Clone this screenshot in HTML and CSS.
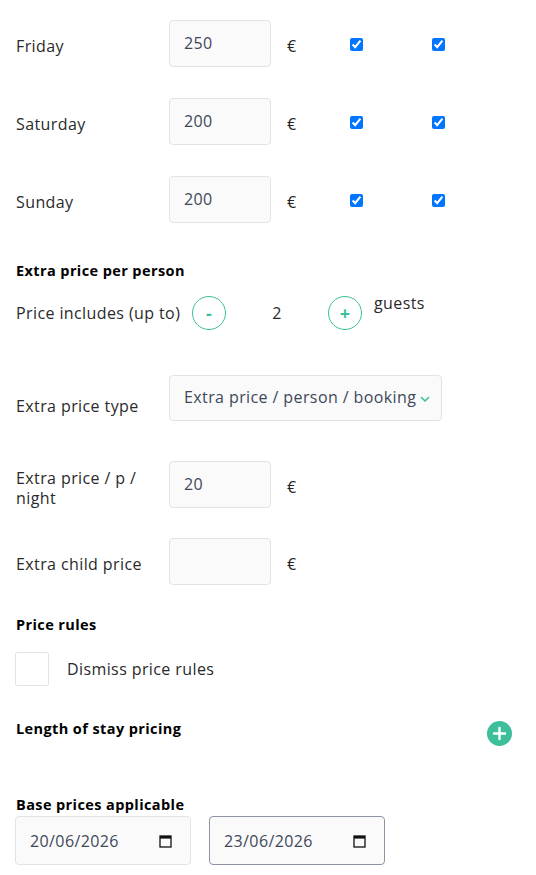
FILE: index.html
```html
<!DOCTYPE html>
<html lang="en">
<head>
<meta charset="utf-8">
<title>Pricing</title>
<link rel="stylesheet" href="styles.css">
</head>
<body>
<div class="page">
  <div class="day-row">
    <span class="label">Friday</span>
    <div class="box">250</div>
    <span class="euro">€</span>
    <span class="cb-cell"><input type="checkbox" checked></span>
    <span class="cb-cell"><input type="checkbox" checked></span>
  </div>
  <div class="day-row">
    <span class="label">Saturday</span>
    <div class="box">200</div>
    <span class="euro">€</span>
    <span class="cb-cell"><input type="checkbox" checked></span>
    <span class="cb-cell"><input type="checkbox" checked></span>
  </div>
  <div class="day-row">
    <span class="label">Sunday</span>
    <div class="box">200</div>
    <span class="euro">€</span>
    <span class="cb-cell"><input type="checkbox" checked></span>
    <span class="cb-cell"><input type="checkbox" checked></span>
  </div>

  <h3 class="heading h-extra">Extra price per person</h3>
  <div class="guests-row">
    <span class="label-inline">Price includes (up to)</span>
    <span class="round-btn">-</span>
    <span class="count">2</span>
    <span class="round-btn">+</span>
    <span class="guests">guests</span>
  </div>

  <div class="field-row select-row">
    <span class="label">Extra price type</span>
    <div class="select">
      <span>Extra price / person / booking</span>
      <svg class="chev" width="10" height="7" viewBox="0 0 10 7"><path d="M1.5 1.5 L5 5 L8.5 1.5" fill="none" stroke="#3dbf9c" stroke-width="1.6" stroke-linecap="round" stroke-linejoin="round"/></svg>
    </div>
  </div>

  <div class="field-row night-row">
    <span class="label">Extra price / p /<br>night</span>
    <div class="box">20</div>
    <span class="euro">€</span>
  </div>

  <div class="field-row child-row">
    <span class="label">Extra child price</span>
    <div class="box"></div>
    <span class="euro">€</span>
  </div>

  <h3 class="heading h-rules">Price rules</h3>
  <div class="dismiss-row">
    <span class="square"></span>
    <span class="dismiss-text">Dismiss price rules</span>
  </div>

  <div class="los-row">
    <h3 class="heading">Length of stay pricing</h3>
    <svg class="add" width="25" height="25" viewBox="0 0 25 25"><circle cx="12.5" cy="12.5" r="12.5" fill="#3dbf9c"/><path d="M12.5 7 V18 M7 12.5 H18" stroke="#fff" stroke-width="2.4" stroke-linecap="round"/></svg>
  </div>

  <h3 class="heading h-base">Base prices applicable</h3>
  <div class="dates">
    <div class="date">
      <span>20/06/2026</span>
      <svg width="13" height="14" viewBox="0 0 13 14"><rect x="1" y="2" width="11" height="11" fill="none" stroke="#111" stroke-width="1.3"/><rect x="1" y="2" width="11" height="2.6" fill="#111"/></svg>
    </div>
    <div class="date focused">
      <span>23/06/2026</span>
      <svg width="13" height="14" viewBox="0 0 13 14"><rect x="1" y="2" width="11" height="11" fill="none" stroke="#111" stroke-width="1.3"/><rect x="1" y="2" width="11" height="2.6" fill="#111"/></svg>
    </div>
  </div>
</div>
</body>
</html>
```
FILE: styles.css
```css
* { box-sizing: border-box; }
html, body { margin: 0; padding: 0; background: #fff; }
body {
  font-family: "Open Sans", "Noto Sans", sans-serif;
  font-size: 16px;
  letter-spacing: 0.4px;
  color: #2a2a2a;
}
.page {
  padding: 20px 24px 0 15px;
  width: 536px;
}
.day-row {
  display: flex;
  align-items: center;
  height: 47px;
  margin-bottom: 31px;
}
.day-row:nth-of-type(3) { margin-bottom: 0; }
.label {
  width: 154px;
  flex: none;
  padding-left: 1px;
  padding-top: 5px;
  line-height: 20px;
}
.box {
  width: 102px;
  height: 47px;
  flex: none;
  border: 1px solid #e3e3e3;
  border-radius: 4px;
  background: #fafafa;
  padding-left: 14px;
  padding-bottom: 2px;
  display: flex;
  align-items: center;
  color: #3e4859;
}
.euro {
  width: 79px;
  flex: none;
  padding-left: 16px;
  padding-top: 4px;
  color: #222;
}
.cb-cell {
  width: 82px;
  flex: none;
  display: flex;
}
.cb-cell input {
  margin: 1px 0 0 0;
  width: 13px;
  height: 13px;
  accent-color: #0075ff;
}
.heading {
  margin: 0;
  font-size: 14.5px;
  font-weight: 700;
  letter-spacing: 0.4px;
  line-height: 20px;
  color: #000;
  padding-left: 1px;
}
.h-extra { margin-top: 38px; }
.guests-row {
  display: flex;
  align-items: center;
  margin-top: 15px;
  height: 34px;
}
.label-inline { padding-left: 1px; width: 177px; flex: none; }
.round-btn {
  width: 34px;
  height: 34px;
  flex: none;
  border: 1px solid #3dbf9c;
  border-radius: 50%;
  color: #3dbf9c;
  font-weight: 700;
  display: flex;
  align-items: center;
  justify-content: center;
  font-size: 18px;
  letter-spacing: 0;
  padding-bottom: 1px;
}
.count {
  width: 102px;
  text-align: center;
  flex: none;
}
.guests {
  margin-left: 12px;
  align-self: flex-start;
  margin-top: -4px;
}
.field-row {
  display: flex;
  align-items: center;
}
.select-row { margin-top: 45px; }
.select-row .label { padding-top: 16px; }
.select {
  width: 273px;
  height: 46px;
  border: 1px solid #e3e3e3;
  border-radius: 4px;
  background: #fafafa;
  padding-left: 14px;
  padding-bottom: 2px;
  display: flex;
  align-items: center;
  color: #3e4859;
}
.chev { margin-left: 4px; margin-top: 5px; }
.night-row { margin-top: 40px; }
.night-row .label { padding-top: 6px; }
.child-row { margin-top: 30px; }
.h-rules { margin-top: 30px; }
.dismiss-row {
  display: flex;
  align-items: center;
  margin-top: 17px;
}
.square {
  width: 34px;
  height: 34px;
  border: 1px solid #e3e3e3;
  border-radius: 2px;
  background: #fff;
}
.dismiss-text { margin-left: 18px; }
.los-row {
  display: flex;
  justify-content: space-between;
  align-items: flex-start;
  margin-top: 33px;
}
.los-row .add { margin-top: 2px; }
.h-base { margin-top: 49px; }
.dates {
  display: flex;
  gap: 18px;
  margin-top: 1px;
}
.date {
  width: 176px;
  height: 49px;
  border: 1px solid #e3e3e3;
  border-radius: 4px;
  background: #fafafa;
  display: flex;
  align-items: center;
  justify-content: space-between;
  padding: 0 18px 0 14px;
  color: #3e4859;
}
.date.focused { border-color: #8d94a3; }
```
